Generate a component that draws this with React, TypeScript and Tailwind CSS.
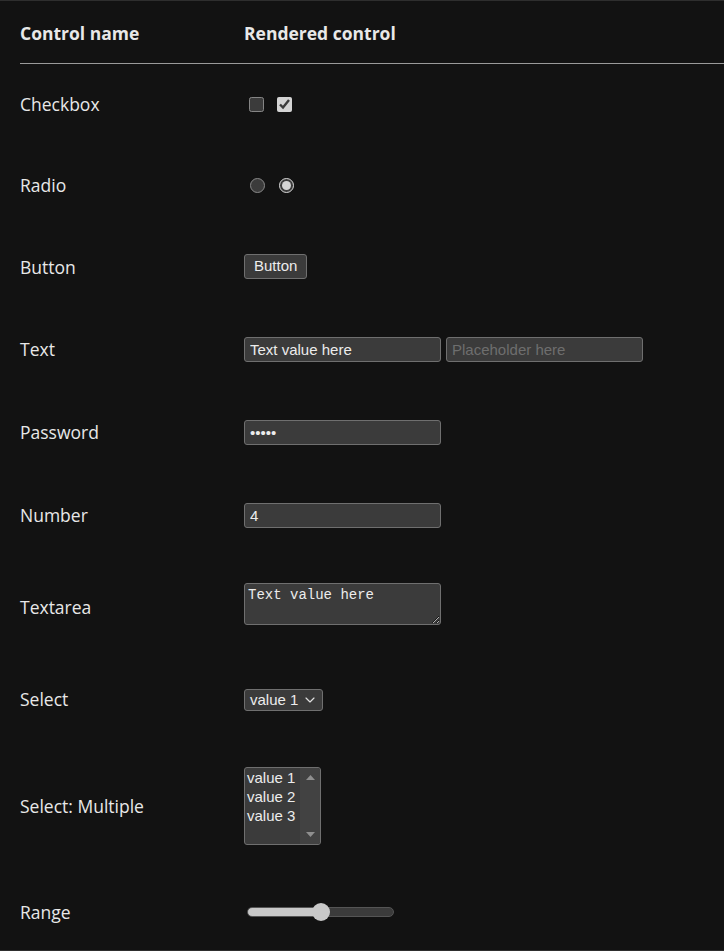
import { ChevronDown } from "lucide-react";

const inputCls =
  "h-[25px] w-[197px] rounded-[3px] border border-[#6f6f6f] bg-[#3b3b3b] px-[5px] text-[15px] text-[#ececec] font-['Liberation_Sans',Arial,sans-serif] outline-none placeholder:text-[#6e6e6e]";

const Row = ({ name, children, pad = "pt-[28px] pb-[29px]" }: { name: string; children: React.ReactNode; pad?: string }) => (
  <div className={"grid grid-cols-[224px_1fr] items-center " + pad}>
    <div className="text-[17.5px] leading-[24px]">{name}</div>
    <div className="flex min-h-[24px] items-center">{children}</div>
  </div>
);

export default function App() {
  return (
    <div className="h-[951px] overflow-hidden border-y border-[#2e2e2e] bg-[#121212] text-[#e8e8e8] accent-[#d4d4d4] [color-scheme:dark] font-['Open_Sans','Noto_Sans',sans-serif]">
      <div className="ml-5">
        <div className="grid h-[63px] grid-cols-[224px_1fr] items-center border-b border-[#9a9a9a] pt-[2px] text-[17.5px] font-bold">
          <div>Control name</div>
          <div>Rendered control</div>
        </div>

        <Row name="Checkbox">
          <div className="flex items-center gap-[13px] pl-[5px]">
            <input type="checkbox" className="h-[15px] w-[15px]" />
            <input type="checkbox" defaultChecked className="h-[15px] w-[15px]" />
          </div>
        </Row>

        <Row name="Radio">
          <div className="flex items-center gap-[14px] pl-[6px]">
            <input type="radio" name="r" className="h-[15px] w-[15px]" />
            <input type="radio" name="r" defaultChecked className="h-[15px] w-[15px]" />
          </div>
        </Row>

        <Row name="Button">
          <button className="h-[25px] rounded-[3px] border border-[#6f6f6f] bg-[#3b3b3b] px-[9px] text-[15px] text-[#ececec] font-['Liberation_Sans',Arial,sans-serif]">
            Button
          </button>
        </Row>

        <Row name="Text">
          <div className="flex min-h-[26px] items-center gap-[5px]">
            <input type="text" defaultValue="Text value here" className={inputCls} />
            <input type="text" placeholder="Placeholder here" className={inputCls + " w-[196px]"} />
          </div>
        </Row>

        <Row name="Password">
          <div className="flex min-h-[26px] items-center">
            <input type="password" defaultValue="12345" className={inputCls} />
          </div>
        </Row>

        <Row name="Number">
          <div className="flex min-h-[26px] items-center">
            <input
              type="number"
              defaultValue={4}
              className={inputCls + " [appearance:textfield] [&::-webkit-inner-spin-button]:appearance-none [&::-webkit-outer-spin-button]:appearance-none"}
            />
          </div>
        </Row>

        <Row name="Textarea">
          <div className="flex min-h-[44px] items-start">
            <textarea
              defaultValue="Text value here"
              className="-mt-[2px] h-[42px] w-[197px] rounded-[3px] border border-[#6f6f6f] bg-[#3b3b3b] px-[3px] pt-[3px] text-[14px] leading-[17px] text-[#ececec] font-['Liberation_Mono','DejaVu_Sans_Mono',monospace] outline-none"
            />
          </div>
        </Row>

        <Row name="Select">
          <div className="flex min-h-[26px] items-center">
            <div className="mt-[2px] flex h-[22px] w-[79px] items-center justify-between rounded-[3px] border border-[#6f6f6f] bg-[#3b3b3b] pl-[5px] pr-[4px] text-[15px] text-[#ececec] font-['Liberation_Sans',Arial,sans-serif]">
              <span>value 1</span>
              <ChevronDown size={16} strokeWidth={1.75} className="text-[#e0e0e0]" />
            </div>
          </div>
        </Row>

        <Row name="Select: Multiple" pad="pt-[26px] pb-[27px]">
          <div className="flex h-[78px] w-[77px] overflow-hidden rounded-[3px] border border-[#6f6f6f] bg-[#3b3b3b] text-[15px] leading-[19px] text-[#ececec] font-['Liberation_Sans',Arial,sans-serif]">
            <div className="flex-1 pl-[2px]">
              <div>value 1</div>
              <div>value 2</div>
              <div>value 3</div>
            </div>
            <div className="flex w-[20px] flex-col items-center justify-between bg-[#424242] py-[7px]">
              <svg width="9" height="5" viewBox="0 0 9 5"><path d="M0 5 L4.5 0 L9 5 Z" fill="#8f8f8f" /></svg>
              <svg width="9" height="5" viewBox="0 0 9 5"><path d="M0 0 L4.5 5 L9 0 Z" fill="#8f8f8f" /></svg>
            </div>
          </div>
        </Row>

        <Row name="Range">
          <input
            type="range"
            defaultValue={50}
            className="ml-[3px] h-[18px] w-[147px] appearance-none bg-transparent [&::-webkit-slider-runnable-track]:h-[10px] [&::-webkit-slider-runnable-track]:rounded-full [&::-webkit-slider-runnable-track]:border [&::-webkit-slider-runnable-track]:border-[#555555] [&::-webkit-slider-runnable-track]:bg-[linear-gradient(to_right,#c8c8c8_50%,#3b3b3b_50%)] [&::-webkit-slider-thumb]:-mt-[5px] [&::-webkit-slider-thumb]:h-[18px] [&::-webkit-slider-thumb]:w-[18px] [&::-webkit-slider-thumb]:appearance-none [&::-webkit-slider-thumb]:rounded-full [&::-webkit-slider-thumb]:bg-[#c8c8c8]"
          />
        </Row>
      </div>
    </div>
  );
}
